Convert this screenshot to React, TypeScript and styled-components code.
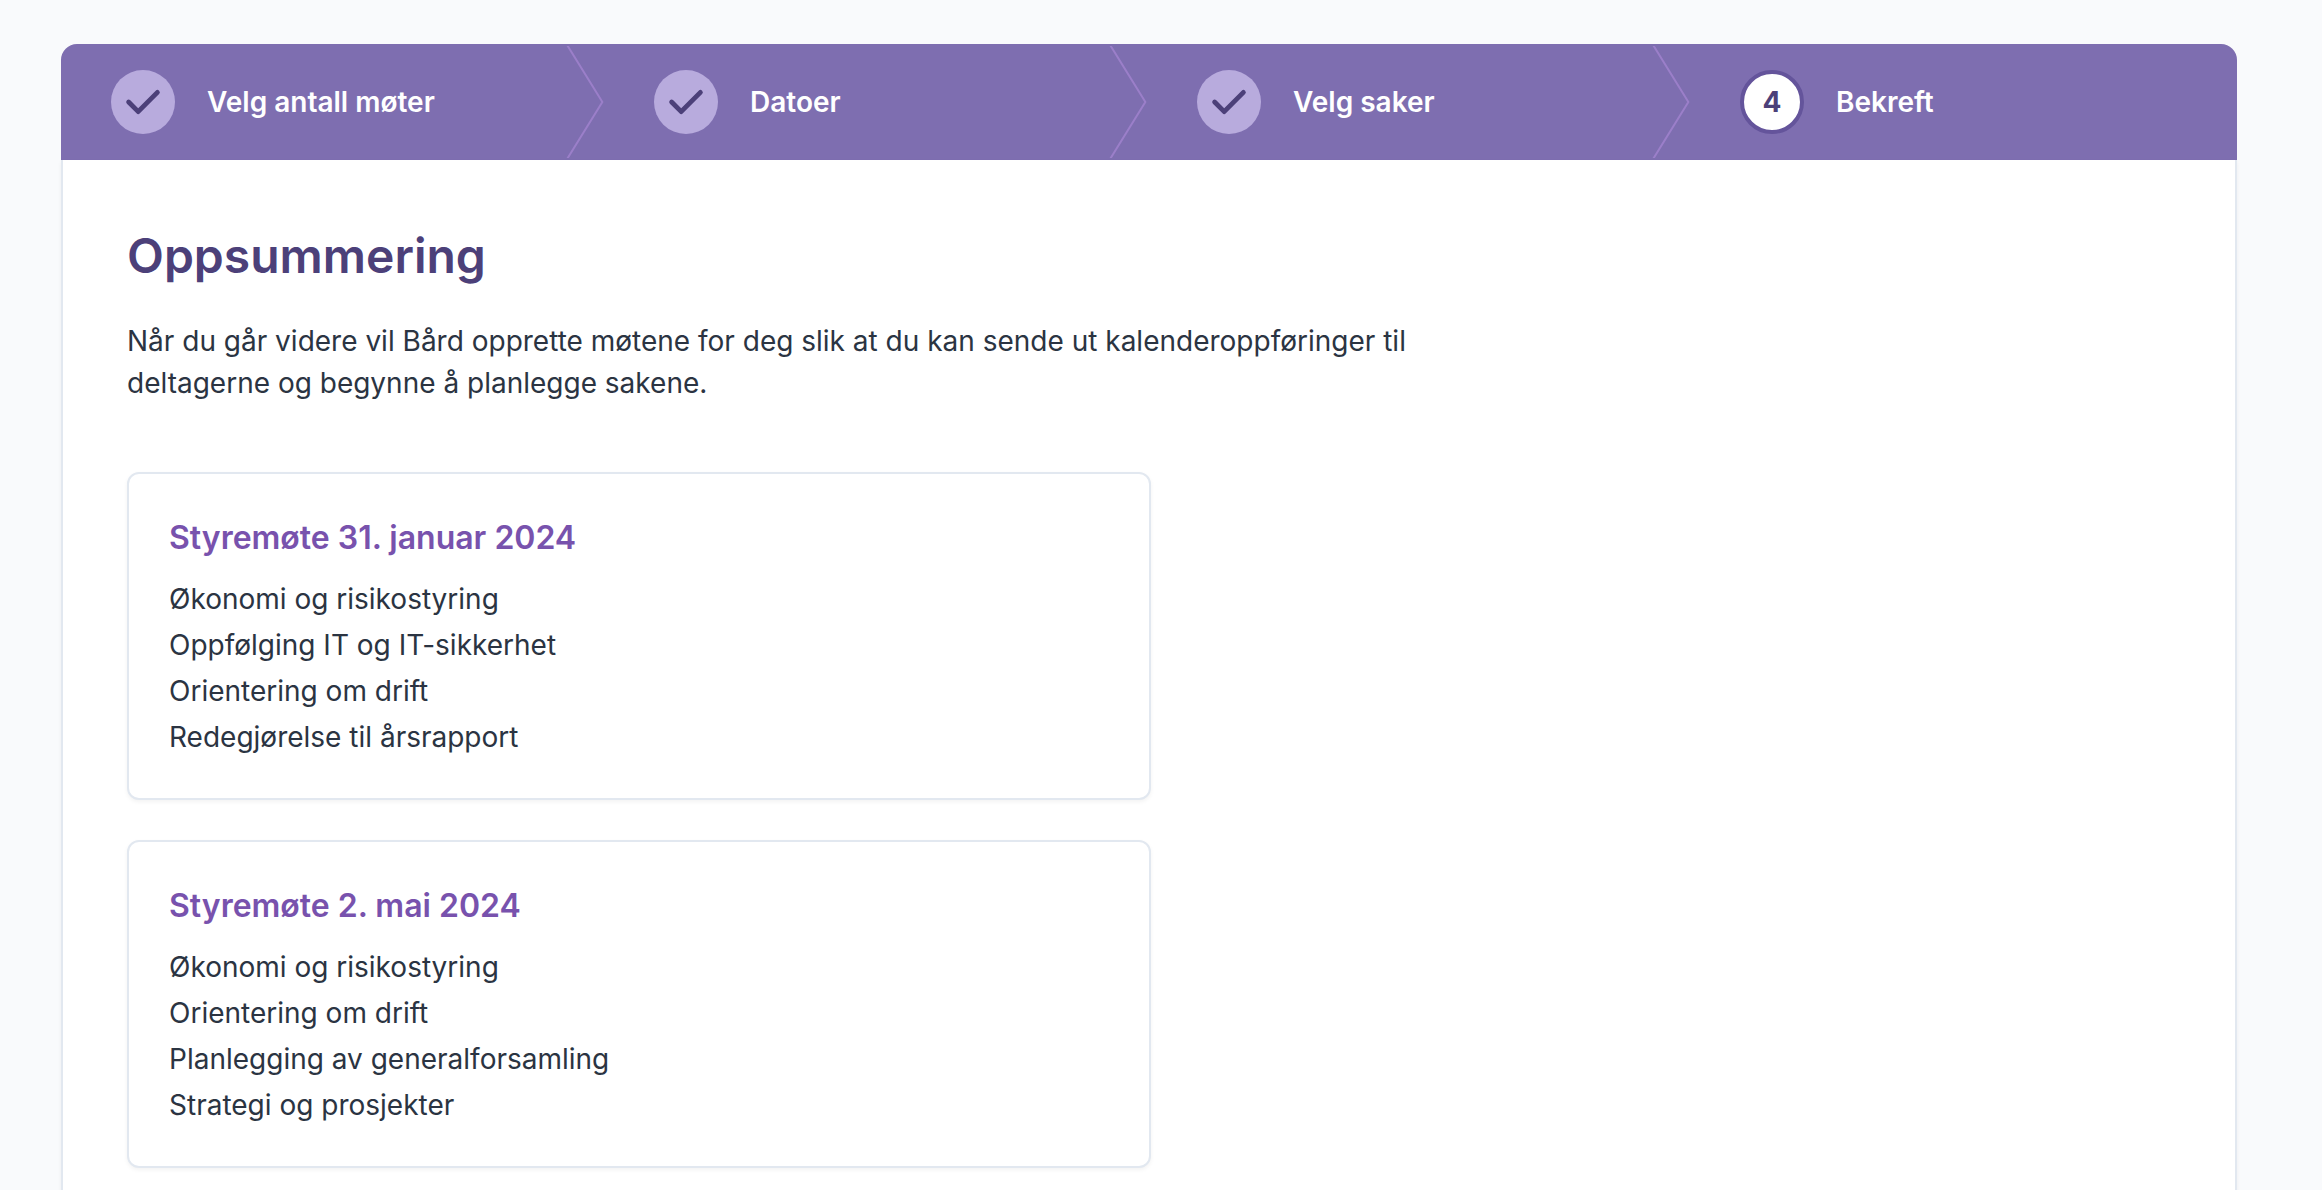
import React from 'react';
import styled, { createGlobalStyle, css } from 'styled-components';

const GlobalStyle = createGlobalStyle`
  *, *::before, *::after { box-sizing: border-box; }
  html { scrollbar-width: none; }
  body {
    margin: 0;
    background: #f9fafc;
    color: #2b3442;
    font-family: Inter, "Liberation Sans", sans-serif;
    font-size: 28px;
    line-height: 42px;
    -webkit-font-smoothing: antialiased;
  }
`;

const Page = styled.main`
  padding: 44px 85px 44px 61px;
`;

const Steps = styled.ol`
  display: grid;
  grid-template-columns: repeat(4, 1fr);
  margin: 0;
  padding: 0;
  list-style: none;
  background: #7e6eb0;
  border: 2px solid #7e6eb0;
  border-radius: 16px 16px 0 0;
`;

const Step = styled.li`
  position: relative;
  display: flex;
`;

const StepLink = styled.a`
  display: flex;
  flex: 1;
  align-items: center;
  gap: 32px;
  padding: 24px 48px;
  color: #ffffff;
  font-weight: 600;
  text-decoration: none;
`;

const Badge = styled.span<{ $current?: boolean }>`
  display: flex;
  align-items: center;
  justify-content: center;
  width: 64px;
  height: 64px;
  border-radius: 50%;
  ${({ $current }) =>
    $current
      ? css`
          background: #ffffff;
          border: 4px solid #64549b;
        `
      : css`
          background: #b8abdd;
        `}
  color: #4c4079;
  font-weight: 700;
`;

const CheckIcon = styled.svg`
  width: 48px;
  height: 48px;
`;

const Chevron = styled.svg`
  position: absolute;
  top: 0;
  right: 0;
  width: 40px;
  height: 100%;
  color: #9b7fc9;
`;

const Panel = styled.section`
  padding: 64px;
  background: #ffffff;
  border: 2px solid #e2e8f0;
  border-top: 0;
  box-shadow: 0 2px 4px rgba(0, 0, 0, 0.05);
`;

const Title = styled.h1`
  margin: 0 0 32px;
  color: #4c4079;
  font-size: 48px;
  line-height: 64px;
  font-weight: 600;
`;

const Intro = styled.p`
  max-width: 1300px;
  margin: 0 0 68px;
`;

const Meetings = styled.div`
  display: flex;
  flex-direction: column;
  gap: 40px;
  max-width: 1024px;
`;

const Card = styled.article`
  padding: 40px;
  background: #ffffff;
  border: 2px solid #e2e8f0;
  border-radius: 12px;
  box-shadow: 0 2px 4px rgba(0, 0, 0, 0.05);
`;

const CardTitle = styled.h2`
  margin: 0 0 16px;
  color: #7852ad;
  font-size: 32px;
  line-height: 48px;
  font-weight: 600;
`;

const Agenda = styled.ul`
  display: grid;
  gap: 4px;
  margin: 0;
  padding: 0;
  list-style: none;
`;

const steps = ['Velg antall møter', 'Datoer', 'Velg saker', 'Bekreft'];
const currentStep = 3;

const meetings = [
  {
    title: 'Styremøte 31. januar 2024',
    items: [
      'Økonomi og risikostyring',
      'Oppfølging IT og IT-sikkerhet',
      'Orientering om drift',
      'Redegjørelse til årsrapport',
    ],
  },
  {
    title: 'Styremøte 2. mai 2024',
    items: [
      'Økonomi og risikostyring',
      'Orientering om drift',
      'Planlegging av generalforsamling',
      'Strategi og prosjekter',
    ],
  },
];

export default function App() {
  return (
    <>
      <GlobalStyle />
      <Page>
        <nav>
          <Steps>
            {steps.map((label, i) => (
              <Step key={label}>
                <StepLink href="#" aria-current={i === currentStep ? 'step' : undefined}>
                  <Badge $current={i === currentStep}>
                    {i < currentStep ? (
                      <CheckIcon viewBox="0 0 20 20" fill="currentColor" aria-hidden="true">
                        <path d="M16.707 5.293a1 1 0 010 1.414l-8 8a1 1 0 01-1.414 0l-4-4a1 1 0 011.414-1.414L8 12.586l7.293-7.293a1 1 0 011.414 0z" />
                      </CheckIcon>
                    ) : (
                      i + 1
                    )}
                  </Badge>
                  {label}
                </StepLink>
                {i < steps.length - 1 && (
                  <Chevron viewBox="0 0 22 80" fill="none" preserveAspectRatio="none" aria-hidden="true">
                    <path
                      d="M0 -2L20 40L0 82"
                      vectorEffect="non-scaling-stroke"
                      stroke="currentColor"
                      strokeWidth="2"
                      strokeLinejoin="round"
                    />
                  </Chevron>
                )}
              </Step>
            ))}
          </Steps>
        </nav>
        <Panel>
          <Title>Oppsummering</Title>
          <Intro>
            Når du går videre vil Bård opprette møtene for deg slik at du kan sende ut
            kalenderoppføringer til deltagerne og begynne å planlegge sakene.
          </Intro>
          <Meetings>
            {meetings.map((meeting) => (
              <Card key={meeting.title}>
                <CardTitle>{meeting.title}</CardTitle>
                <Agenda>
                  {meeting.items.map((item) => (
                    <li key={item}>{item}</li>
                  ))}
                </Agenda>
              </Card>
            ))}
          </Meetings>
        </Panel>
      </Page>
    </>
  );
}
